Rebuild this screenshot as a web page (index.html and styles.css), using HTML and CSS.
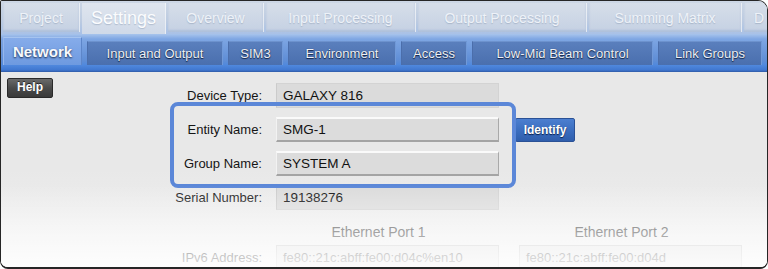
FILE: index.html
```html
<!DOCTYPE html>
<html lang="en">
<head>
    <meta charset="UTF-8">
    <title>Settings - Network</title>
    <link rel="stylesheet" href="styles.css">
</head>
<body>
    <div class="window">
        <div class="main-tabs">
            <div class="tab tab-project">Project</div>
            <div class="tab tab-settings active">Settings</div>
            <div class="tab tab-overview">Overview</div>
            <div class="tab tab-input">Input Processing</div>
            <div class="tab tab-output">Output Processing</div>
            <div class="tab tab-summing">Summing Matrix</div>
            <div class="tab tab-more">D</div>
        </div>

        <div class="sub-tabs">
            <div class="sub-tab sub-network active">Network</div>
            <div class="sub-tab sub-io">Input and Output</div>
            <div class="sub-tab sub-sim">SIM3</div>
            <div class="sub-tab sub-env">Environment</div>
            <div class="sub-tab sub-access">Access</div>
            <div class="sub-tab sub-beam">Low-Mid Beam Control</div>
            <div class="sub-tab sub-link">Link Groups</div>
        </div>

        <div class="content">
            <button class="help-button">Help</button>

            <div class="form">
                <div class="row">
                    <span class="label">Device Type:</span>
                    <div class="field readonly">GALAXY 816</div>
                </div>
                <div class="row">
                    <span class="label">Entity Name:</span>
                    <div class="field editable">SMG-1</div>
                    <button class="identify-button">Identify</button>
                </div>
                <div class="row">
                    <span class="label">Group Name:</span>
                    <div class="field editable">SYSTEM A</div>
                </div>
                <div class="row">
                    <span class="label">Serial Number:</span>
                    <div class="field readonly">19138276</div>
                </div>
                <div class="row port-heads">
                    <span class="label"></span>
                    <span class="port-title">Ethernet Port 1</span>
                    <span class="port-title second">Ethernet Port 2</span>
                </div>
                <div class="row ipv6-row">
                    <span class="label">IPv6 Address:</span>
                    <div class="field readonly">fe80::21c:abff:fe00:d04c%en10</div>
                    <div class="field readonly second">fe80::21c:abff:fe00:d04d</div>
                </div>
            </div>

            <!-- callout round the editable names -->
            <div class="highlight"></div>
        </div>

        <div class="fade"></div>
    </div>
</body>
</html>
```

FILE: styles.css
```css
* {
    margin: 0;
    padding: 0;
    box-sizing: border-box;
}

body {
    background: white;
    font-family: 'Liberation Sans', Arial, Helvetica, sans-serif;
    width: 768px;
    height: 269px;
    overflow: hidden;
}

.window {
    position: relative;
    width: 768px;
    height: 269px;
    border: 1px solid #262626;
    border-bottom-width: 2px;
    border-radius: 2px 10px 8px 8px;
    overflow: hidden;
    background: #e8e8e8;
}

/* top level tabs */
.main-tabs {
    display: flex;
    gap: 2px;
    height: 33px;
    padding: 2px 0 0 2px;
    background: linear-gradient(#cdd7e5 0%, #bccbe1 60%, #a9c1e6 100%);
    overflow: hidden;
}

.tab {
    flex: none;
    height: 29px;
    display: flex;
    align-items: center;
    justify-content: center;
    font-size: 14px;
    color: #eef2f8;
    text-shadow: 0 1px 1px rgba(90, 110, 140, 0.3);
    background: linear-gradient(#d6dee9 0%, #c5d1e3 100%);
    border-right: 1px solid rgba(255, 255, 255, 0.5);
    box-shadow: inset 0 -2px 2px rgba(140, 168, 208, 0.4);
    white-space: nowrap;
}

.tab.active {
    height: 31px;
    font-size: 18px;
    color: #fbfcfe;
    background: linear-gradient(#dfe5ee 0%, #cfd9e8 100%);
    box-shadow: none;
}

.tab-project { width: 77px; }
.tab-settings { width: 84px; }
.tab-overview { width: 96px; }
.tab-input { width: 150px; }
.tab-output { width: 169px; }
.tab-summing { width: 153px; }
.tab-more { width: 40px; justify-content: flex-start; padding-left: 10px; }

/* second level tabs */
.sub-tabs {
    display: flex;
    align-items: flex-end;
    gap: 5px;
    height: 38px;
    padding: 0 0 7px 2px;
    background:
        linear-gradient(#a8c4ec 0px, #7ea6e3 5px, #5e8dd6 27px, #5089de 31px, #4077d0 36px, #2f5aa6 38px);
}

.sub-tab {
    flex: none;
    height: 24px;
    display: flex;
    align-items: center;
    justify-content: center;
    font-size: 13px;
    color: #eef1f6;
    text-shadow: 0 1px 1px rgba(10, 25, 55, 0.9), 0 0 1px rgba(10, 25, 55, 0.6);
    background: linear-gradient(#5a7fbd 0%, #4a6fae 100%);
    border-top: 1px solid #6d92cd;
    border-left: 1px solid #4b6eab;
    border-right: 1px solid #7099d8;
    white-space: nowrap;
}

.sub-tab.active {
    height: 28px;
    font-size: 15px;
    font-weight: bold;
    color: #f7f9fc;
    text-shadow: 0 1px 2px rgba(10, 25, 55, 0.9);
    background: linear-gradient(#86acea 0%, #6e9ae0 100%);
    border-top: 1px solid #a6c4f0;
    border-left: 1px solid #95b6ec;
    border-right: 1px solid #5d86c9;
}

.sub-network { width: 79px; }
.sub-io { width: 136px; }
.sub-sim { width: 55px; }
.sub-env { width: 108px; }
.sub-access { width: 66px; }
.sub-beam { width: 181px; }
.sub-link { width: 104px; }

/* content */
.content {
    position: relative;
    display: flex;
    align-items: flex-start;
    padding: 6px 0 0 6px;
    height: 196px;
    background: linear-gradient(#e8e8e8 0%, #e8e8e8 50%, #f2f2f2 100%);
}

.help-button {
    flex: none;
    width: 46px;
    height: 20px;
    font-family: inherit;
    font-size: 12px;
    font-weight: bold;
    color: white;
    text-shadow: 0 -1px 0 rgba(0, 0, 0, 0.6);
    background: linear-gradient(#6a6a6a 0%, #4a4a4a 50%, #3a3a3a 100%);
    border: 1px solid #2a2a2a;
    border-radius: 2px;
    padding-bottom: 2px;
}

.form {
    margin: 5px 0 0 9px;
    display: flex;
    flex-direction: column;
}

.row {
    display: flex;
    align-items: center;
    height: 25px;
}

.row + .row {
    margin-top: 9px;
}

.label {
    flex: none;
    width: 200px;
    margin-right: 14px;
    text-align: right;
    font-size: 13px;
    color: #151515;
}

.field {
    flex: none;
    width: 223px;
    height: 25px;
    padding-left: 6px;
    display: flex;
    align-items: center;
    font-size: 13.5px;
    color: #111;
    white-space: nowrap;
    overflow: hidden;
}

.field.readonly {
    background: #dbdbdb;
    border: 1px solid #d3d3d3;
    border-left-color: #cbcbcb;
}

.field.editable {
    background: #dcdcdc;
    border-top: 2px solid #fafafa;
    border-left: 1px solid #f2f2f2;
    border-right: 1px solid #a9a9a9;
    border-bottom: 2px solid #a4a4a4;
}

.field.second {
    margin-left: 20px;
}

.identify-button {
    flex: none;
    margin-left: 16px;
    width: 60px;
    height: 24px;
    font-family: inherit;
    font-size: 12px;
    font-weight: bold;
    color: white;
    text-shadow: 0 1px 1px rgba(0, 20, 60, 0.9);
    background: linear-gradient(#4c7fd0 0%, #3a6cbe 55%, #2f5eac 100%);
    border: 1px solid #2a5196;
    border-radius: 2px;
}

.port-heads {
    height: 16px;
    margin-top: 14px !important;
}

.port-title {
    flex: none;
    width: 223px;
    padding-right: 18px;
    text-align: center;
    font-size: 14px;
    color: #444;
}

.port-title.second {
    margin-left: 20px;
}

.ipv6-row {
    margin-top: 5px !important;
}

.ipv6-row .field {
    font-size: 13px;
    color: #555;
    border-color: #c8c8c8;
    background: #e4e4e4;
}

.highlight {
    position: absolute;
    top: 30px;
    left: 169px;
    width: 346px;
    height: 86px;
    border: 4px solid #5b87d8;
    border-radius: 8px;
    pointer-events: none;
}

.fade {
    position: absolute;
    left: 0;
    right: 0;
    bottom: 0;
    height: 82px;
    background: linear-gradient(rgba(255, 255, 255, 0) 0%, rgba(255, 255, 255, 0.45) 50%, rgba(255, 255, 255, 0.85) 100%);
    pointer-events: none;
}
```
